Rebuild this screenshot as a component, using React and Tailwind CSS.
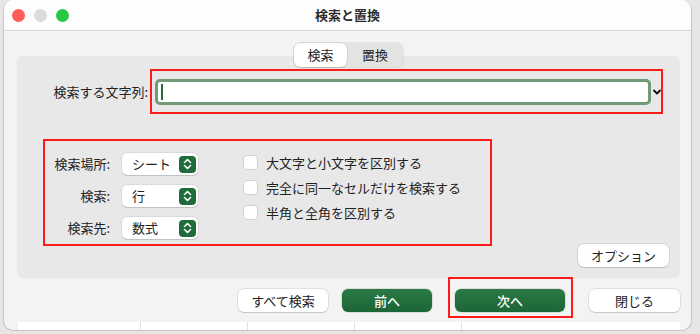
import React from "react";

const font = { fontFamily: '"Noto Sans CJK JP", "Noto Sans", sans-serif' };

function Stepper() {
  return (
    <span className="flex h-[17px] w-[17px] items-center justify-center rounded-[4px] bg-[#1f6b3c]">
      <svg width="9" height="12" viewBox="0 0 9 12" fill="none" stroke="white" strokeWidth="1.6" strokeLinecap="round" strokeLinejoin="round">
        <path d="M1.5 4.5 L4.5 1.5 L7.5 4.5" />
        <path d="M1.5 7.5 L4.5 10.5 L7.5 7.5" />
      </svg>
    </span>
  );
}

function Select({ value }) {
  return (
    <div className="flex h-[22px] w-[76px] items-center justify-between rounded-[5px] bg-white pl-[10px] pr-[2px] shadow-[0_0_0_0.5px_rgba(0,0,0,0.12),0_1px_1px_rgba(0,0,0,0.12)]">
      <span className="text-[13px] text-[#222]">{value}</span>
      <Stepper />
    </div>
  );
}

function Check({ label }) {
  return (
    <div className="flex h-[15px] items-center gap-[8px]">
      <span className="h-[15px] w-[15px] rounded-[4px] border border-[#cfcfcf] bg-white" />
      <span className="text-[13px] text-[#222]">{label}</span>
    </div>
  );
}

function WhiteButton({ children, w }) {
  return (
    <button className={`flex h-[23px] ${w} items-center justify-center rounded-[6px] bg-white text-[13px] text-[#222] shadow-[0_0_0_0.5px_rgba(0,0,0,0.15),0_1px_1px_rgba(0,0,0,0.12)]`}>
      {children}
    </button>
  );
}

function GreenButton({ children, w }) {
  return (
    <button className={`flex h-[23px] ${w} items-center justify-center rounded-[6px] bg-gradient-to-b from-[#2a7a47] to-[#1c6536] text-[13px] font-medium text-white shadow-[0_0_0_0.5px_rgba(0,0,0,0.2)]`}>
      {children}
    </button>
  );
}

export default function App() {
  return (
    <div className="h-[334px] w-[700px] overflow-hidden bg-[#e6e6e6] pl-[3px]" style={font}>
      <div className="flex h-[331px] w-[689px] flex-col overflow-hidden rounded-b-[10px] rounded-t-[10px] border border-t-0 border-[#c4c4c4] bg-[#f3f3f3]">
        {/* Title bar */}
        <div className="relative flex h-[31px] shrink-0 items-center border-b border-[#d8d8d8] bg-[#fdfdfd] pl-[8px]">
          <div className="flex gap-[9px]">
            <span className="h-[13px] w-[13px] rounded-full bg-[#fe5f57]" />
            <span className="h-[13px] w-[13px] rounded-full bg-[#dcdcdc]" />
            <span className="h-[13px] w-[13px] rounded-full bg-[#28c840]" />
          </div>
          <div className="absolute inset-0 flex items-center justify-center text-[13px] font-bold text-[#2a2a2a]">
            検索と置換
          </div>
        </div>

        {/* Body */}
        <div className="flex shrink-0 flex-col pl-[13px] pr-[11px]">
          {/* Tabs */}
          <div className="relative z-10 mt-[12px] flex shrink-0 justify-center">
            <div className="flex h-[24px] rounded-[6px] bg-[#e3e3e3] shadow-[0_0_0_0.5px_rgba(0,0,0,0.1)]">
              <div className="flex w-[53px] items-center justify-center rounded-[6px] bg-white text-[13px] text-[#222] shadow-[0_0_0_0.5px_rgba(0,0,0,0.15),0_1px_1px_rgba(0,0,0,0.1)]">
                検索
              </div>
              <div className="flex w-[56px] items-center justify-center text-[13px] text-[#222]">置換</div>
            </div>
          </div>

          {/* Panel */}
          <div className="-mt-[11px] flex shrink-0 flex-col rounded-[6px] bg-[#e8e8e8] pb-[11px] pt-[13px]">
            <div className="flex items-center">
              <div className="w-[131px] text-right text-[13px] text-[#222]">検索する文字列:</div>
              <div className="ml-[2px] flex h-[45px] w-[513px] items-center border-2 border-[#ff1a1a] pl-[3px]">
                <div className="flex h-[26px] w-[497px] items-center rounded-[5px] border-[3px] border-[#6f9b78] bg-white pl-[3px]">
                  <span className="h-[16px] w-[2px] bg-[#1f6b3c]" />
                </div>
                <svg className="ml-[2px]" width="8" height="6" viewBox="0 0 8 6" fill="none" stroke="#111" strokeWidth="1.8" strokeLinecap="round" strokeLinejoin="round">
                  <path d="M1 1.5 L4 4.5 L7 1.5" />
                </svg>
              </div>
            </div>

            <div className="mt-[25px] flex items-end justify-between pl-[26px]">
              <div className="mb-[21px] flex h-[107px] w-[449px] border-2 border-[#ff1a1a]">
                <div className="flex flex-col gap-[10px] pt-[12px]">
                  {[
                    ["検索場所:", "シート"],
                    ["検索:", "行"],
                    ["検索先:", "数式"],
                  ].map(([l, v]) => (
                    <div key={l} className="flex items-center">
                      <div className="w-[65px] text-right text-[13px] text-[#222]">{l}</div>
                      <div className="ml-[12px]">
                        <Select value={v} />
                      </div>
                    </div>
                  ))}
                </div>
                <div className="ml-[45px] flex flex-col gap-[10px] pt-[14px]">
                  <Check label="大文字と小文字を区別する" />
                  <Check label="完全に同一なセルだけを検索する" />
                  <Check label="半角と全角を区別する" />
                </div>
              </div>
              <div className="mr-[11px]">
                <WhiteButton w="w-[91px]">オプション</WhiteButton>
              </div>
            </div>
          </div>

          {/* Bottom buttons */}
          <div className="mt-[11px] flex h-[23px] shrink-0 items-start justify-end">
            <WhiteButton w="w-[90px]">すべて検索</WhiteButton>
            <div className="ml-[14px]">
              <GreenButton w="w-[90px]">前へ</GreenButton>
            </div>
            <div className="-mb-[6px] -mt-[12px] ml-[16px] border-2 border-[#ff1a1a] pb-[4px] pl-[5px] pr-[6px] pt-[10px]">
              <GreenButton w="w-[110px]">次へ</GreenButton>
            </div>
            <div className="ml-[16px]">
              <WhiteButton w="w-[91px]">閉じる</WhiteButton>
            </div>
          </div>

          {/* bottom strip */}
          <div className="ml-[1px] mt-[10px] flex h-[8px] shrink-0 bg-white">
            <span className="ml-[122px] h-full w-px bg-[#e0e0e0]" />
            <span className="ml-[106px] h-full w-px bg-[#e0e0e0]" />
            <span className="ml-[106px] h-full w-px bg-[#e0e0e0]" />
            <span className="ml-[106px] h-full w-px bg-[#e0e0e0]" />
          </div>
        </div>
      </div>
    </div>
  );
}
